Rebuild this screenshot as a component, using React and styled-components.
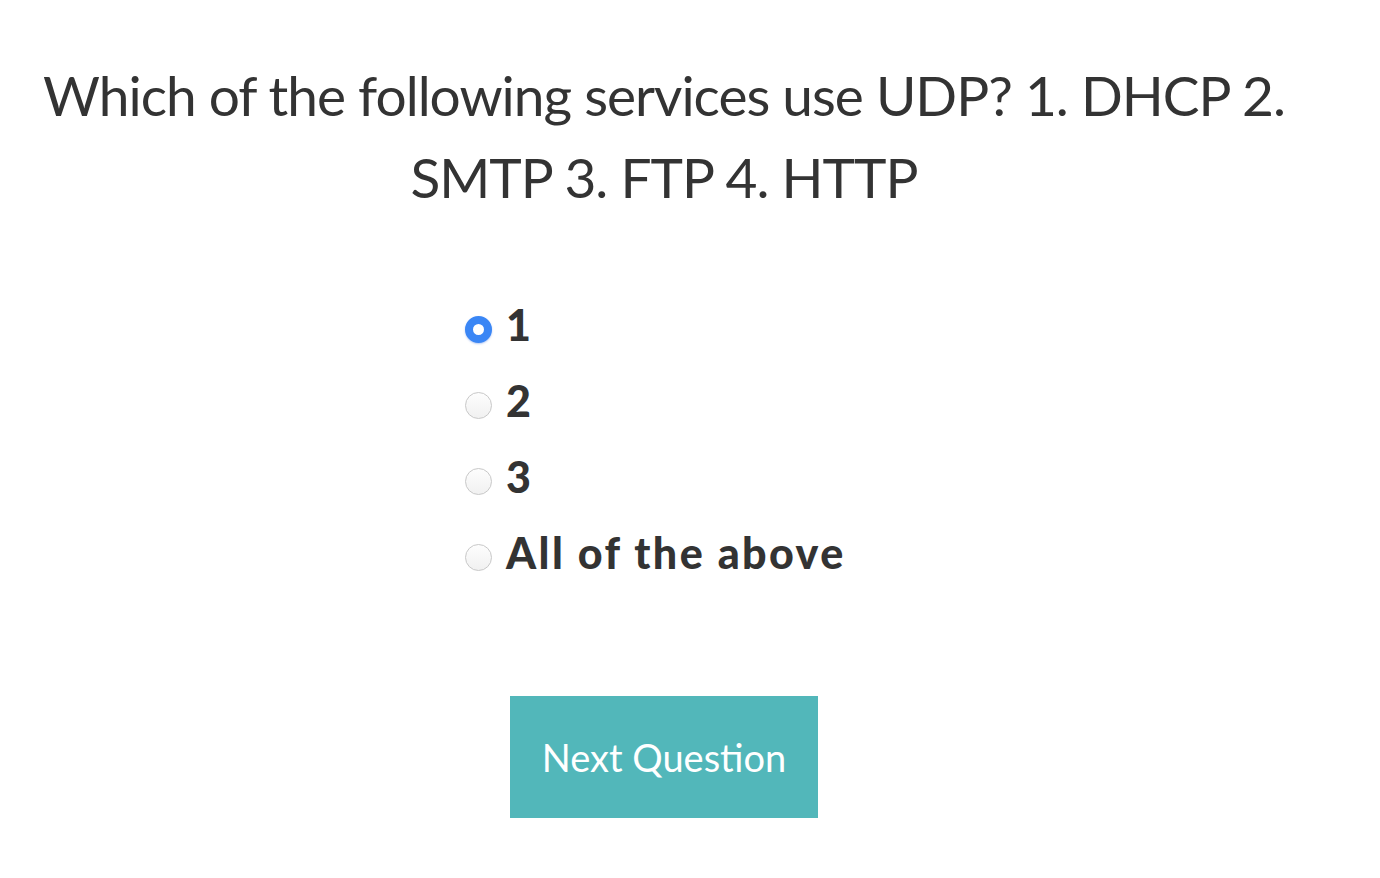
import React, { useState } from "react";
import styled, { createGlobalStyle } from "styled-components";

const Global = createGlobalStyle`
  html, body { margin: 0; padding: 0; background: #fff; }
  body { font-family: "Lato", "Noto Sans", sans-serif; color: #333; }
`;

const Page = styled.main`
  width: 1328px;
  display: flex;
  flex-direction: column;
  align-items: center;
  padding-top: 54px;
`;

const Question = styled.h1`
  margin: 0;
  width: 1300px;
  text-align: center;
  font-family: "Lato", sans-serif;
  font-weight: 400;
  font-size: 55px;
  letter-spacing: -1px;
  line-height: 82px;
  color: #333;
`;

const Options = styled.ul`
  list-style: none;
  margin: 84px 0 0 0;
  padding: 0;
  width: 398px;
  display: flex;
  flex-direction: column;
  gap: 30px;
`;

const Option = styled.li`
  display: flex;
  align-items: center;
  gap: 14px;
  height: 46px;
`;

const Radio = styled.input.attrs({ type: "radio" })`
  appearance: none;
  margin: 0;
  width: 27px;
  height: 27px;
  border-radius: 50%;
  box-sizing: border-box;
  border: 1px solid #c8c8c8;
  background: linear-gradient(#fdfdfd, #f1f1f1);
  flex: none;
  position: relative;
  top: 4px;
  &:checked {
    border: 8px solid #3a86f5;
    background: #fff;
    box-shadow: 0 1px 2px rgba(40, 100, 220, 0.35);
  }
`;

const Label = styled.label`
  font-family: "Lato", sans-serif;
  font-weight: 900;
  font-size: 43px;
  letter-spacing: 2.4px;
  line-height: 46px;
  color: #333;
`;

const NextButton = styled.button`
  margin-top: 120px;
  width: 308px;
  height: 122px;
  border: none;
  background: #52b7ba;
  color: #fff;
  font-family: "Lato", sans-serif;
  font-size: 38px;
  font-weight: 400;
  cursor: pointer;
`;

const choices = ["1", "2", "3", "All of the above"];

export default function App() {
  const [sel, setSel] = useState(0);
  return (
    <>
      <Global />
      <Page>
        <Question>
          Which of the following services use UDP? 1. DHCP 2. SMTP 3. FTP 4. HTTP
        </Question>
        <Options>
          {choices.map((c, i) => (
            <Option key={c}>
              <Radio
                id={`opt${i}`}
                name="answer"
                checked={sel === i}
                onChange={() => setSel(i)}
              />
              <Label htmlFor={`opt${i}`}>{c}</Label>
            </Option>
          ))}
        </Options>
        <NextButton>Next Question</NextButton>
      </Page>
    </>
  );
}
